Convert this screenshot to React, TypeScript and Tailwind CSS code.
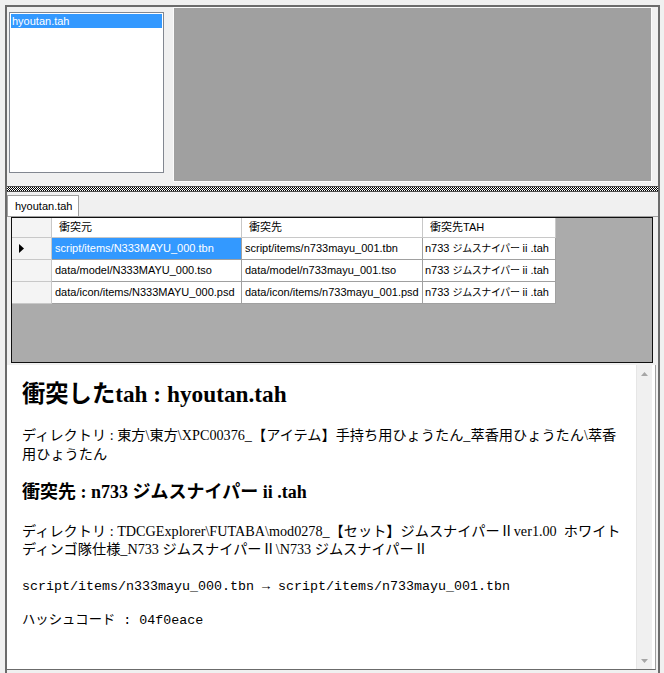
const rows = [
  ["script/items/N333MAYU_000.tbn", "script/items/n733mayu_001.tbn"],
  ["data/model/N333MAYU_000.tso", "data/model/n733mayu_001.tso"],
  ["data/icon/items/N333MAYU_000.psd", "data/icon/items/n733mayu_001.psd"],
];

function RowArrow() {
  return (
    <svg width="5" height="9" viewBox="0 0 5 9">
      <path d="M0 0 L5 4.5 L0 9 Z" fill="#000" />
    </svg>
  );
}

function TahName() {
  return (
    <span className="whitespace-nowrap">
      n733 <span className="text-[10px] tracking-[-0.4px]">ジムスナイパー</span> ii .tah
    </span>
  );
}

function ConflictGrid() {
  return (
    <div className="ml-[4px] w-[642px] h-[146px] border border-[#101010] bg-[#ababab]">
      <div className="grid grid-cols-[40px_190px_181px_133px] w-fit text-[11px] text-black font-['Liberation_Sans','Noto_Sans_CJK_JP',sans-serif]">
        <div className="h-[20px] bg-[#f4f4f4] border-r border-b border-[#c8c8c8]" />
        {["衝突元", "衝突先", "衝突先TAH"].map((h) => (
          <div key={h} className="h-[20px] bg-white border-r border-b border-[#c8c8c8] pl-[7px] flex items-center">
            {h}
          </div>
        ))}
        {rows.map((r, i) => (
          <>
            <div key={"h" + i} className="h-[22px] bg-[#f4f4f4] border-r border-b border-[#c8c8c8] pl-[7px] flex items-center">
              {i === 0 && <RowArrow />}
            </div>
            {r.map((c, j) => (
              <div
                key={i + "-" + j}
                className={`h-[22px] border-r border-b border-[#a0a0a0] pl-[3px] flex items-center whitespace-nowrap overflow-hidden ${
                  i === 0 && j === 0 ? "bg-[#3399ff] text-white" : "bg-white"
                }`}
              >
                {c}
              </div>
            ))}
            <div key={"t" + i} className="h-[22px] border-r border-b border-[#a0a0a0] pl-[2px] flex items-center bg-white">
              <TahName />
            </div>
          </>
        ))}
      </div>
    </div>
  );
}

function ScrollBar() {
  return (
    <div className="w-[16px] bg-[#f0f0f0] border-l border-[#e6e6e6] flex flex-col justify-between">
      <div className="h-[17px] flex items-center justify-center">
        <svg width="7" height="4" viewBox="0 0 7 4">
          <path d="M0 4 L3.5 0 L7 4 Z" fill="#a6a6a6" />
        </svg>
      </div>
      <div className="h-[17px] flex items-center justify-center">
        <svg width="7" height="4" viewBox="0 0 7 4">
          <path d="M0 0 L3.5 4 L7 0 Z" fill="#a6a6a6" />
        </svg>
      </div>
    </div>
  );
}

export default function App() {
  return (
    <div className="w-[664px] h-[673px] bg-[#f0f0f0] overflow-hidden pt-[5px] pl-[5px]">
      <div className="w-[655px] h-[668px] border-l-2 border-t-2 border-r-2 border-[#6b6b6b] flex flex-col">
        {/* upper pane: file list + preview */}
        <div className="h-[179px] flex">
          <div className="ml-[2px] mt-[5px] w-[155px] h-[161px] border border-[#828790] bg-white p-[1px]">
            <div className="h-[14px] bg-[#3399ff] text-white text-[11px] leading-[14px] pl-[1px] font-['Liberation_Sans',sans-serif]">
              hyoutan.tah
            </div>
          </div>
          <div className="ml-[9px] w-[479px] h-[175px] border border-[#fafafa] bg-[#a0a0a0]" />
        </div>

        {/* splitter */}
        <div className="h-[6px] border-y border-[#505050] bg-[repeating-conic-gradient(#000_0_25%,#fff_0_50%)] bg-[length:2px_2px]" />

        {/* lower pane */}
        <div className="flex-1 flex flex-col">
          <div className="mt-[3px] h-[21px] w-[72px] bg-white border-t border-l border-r border-[#a0a0a0] text-[11px] pl-[7px] flex items-center font-['Liberation_Sans',sans-serif]">
            hyoutan.tah
          </div>
          <div className="border-t border-[#a0a0a0]" />
          <ConflictGrid />
          <div className="h-[2px]" />
          <div className="h-[305px] mr-[2px] bg-white flex border-b border-r border-[#a0a0a0] border-b-[#6b6b6b]">
            <div className="flex-1 pl-[15px] pt-[16px] text-black font-['Liberation_Serif','Noto_Sans_CJK_JP',serif]">
              <div className="text-[23.3px] leading-[26px] font-bold whitespace-nowrap">衝突したtah : hyoutan.tah</div>
              <div className="mt-[19px] text-[14.2px] leading-[19px] whitespace-nowrap">
                ディレクトリ : 東方\東方\XPC00376_【アイテム】手持ち用ひょうたん_萃香用ひょうたん\萃香
                <br />
                用ひょうたん
              </div>
              <div className="mt-[17px] text-[18px] leading-[22px] font-bold whitespace-nowrap">衝突先 : n733 ジムスナイパー ii .tah</div>
              <div className="mt-[19px] text-[14.2px] leading-[18px] whitespace-pre">
                {"ディレクトリ : TDCGExplorer\\FUTABA\\mod0278_【セット】ジムスナイパーⅡver1.00  ホワイト"}
                <br />
                {"ディンゴ隊仕様_N733 ジムスナイパーⅡ\\N733 ジムスナイパーⅡ"}
              </div>
              <div className="mt-[21px] text-[13.33px] leading-[16px] whitespace-nowrap font-['Liberation_Mono','Noto_Sans_CJK_JP',monospace]">
                script/items/n333mayu_000.tbn → script/items/n733mayu_001.tbn
              </div>
              <div className="mt-[18px] text-[13.33px] leading-[16px] whitespace-nowrap font-['Liberation_Mono','Noto_Sans_CJK_JP',monospace]">
                ハッシュコード : 04f0eace
              </div>
            </div>
            <ScrollBar />
            <div className="w-[3px]" />
          </div>
        </div>
      </div>
    </div>
  );
}
